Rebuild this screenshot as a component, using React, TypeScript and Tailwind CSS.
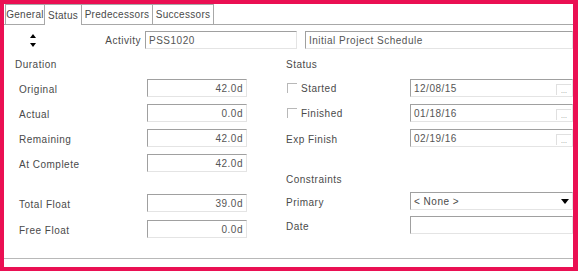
import React from "react";

const font = { fontFamily: '"Liberation Sans", Arial, sans-serif' };

function Box({ value, align = "right", dots = false, w = "w-[100px]" }: { value?: string; align?: "left" | "right"; dots?: boolean; w?: string }) {
  return (
    <div
      className={`relative h-[18px] ${w} border-t border-l border-t-[#a0a0a0] border-l-[#a0a0a0] border-r border-b border-r-[#e4e4e4] border-b-[#e4e4e4] bg-white flex items-center px-[3px] ${
        align === "right" ? "justify-end" : "justify-start"
      }`}
    >
      <span className="text-[10px] tracking-[0.5px] text-[#555]">{value}</span>
      {dots && (
        <div className="absolute right-[1px] bottom-[1px] h-[11px] w-[15px] border-t border-l border-[#e0e0e0] flex items-end justify-center text-[7px] leading-[8px] text-[#888]">
          ...
        </div>
      )}
    </div>
  );
}

function Label({ children, className = "" }: { children: React.ReactNode; className?: string }) {
  return <span className={`text-[10px] tracking-[0.5px] text-[#4a4a4a] ${className}`}>{children}</span>;
}

function Check() {
  return <div className="h-[10px] w-[10px] border-t border-l border-[#b8b8b8]" />;
}

const tabs = [
  { name: "General", w: "w-[40px]" },
  { name: "Status", w: "w-[38px]" },
  { name: "Predecessors", w: "w-[72px]" },
  { name: "Successors", w: "w-[62px]" },
];

export default function App() {
  return (
    <div style={font} className="w-[578px] h-[271px] bg-[#ea1053] pl-[4px] pt-[4px] pr-[5px] pb-[4px]">
      <div className="h-full w-full bg-white flex flex-col">
        {/* tabs */}
        <div className="flex items-end h-[21px] border-b border-[#a8a8a8] pl-[1px]">
          {tabs.map((t) => (
            <div
              key={t.name}
              className={`${t.w} flex items-center justify-center border border-b-0 border-[#a8a8a8] -mr-[1px] bg-white ${
                t.name === "Status" ? "mb-[-1px] h-[21px]" : "h-[20px]"
              }`}
            >
              <span className="text-[10px] tracking-[0.3px] text-[#4a4a4a]">{t.name}</span>
            </div>
          ))}
        </div>

        {/* activity row */}
        <div className="flex items-center mt-[6px] h-[18px]">
          <div className="w-[26px]" />
          <div className="flex flex-col items-center gap-[5px] w-[6px]">
            <svg width="6" height="4" viewBox="0 0 6 4">
              <path d="M3 0 L6 4 L0 4 Z" fill="#000" />
            </svg>
            <svg width="6" height="4" viewBox="0 0 6 4">
              <path d="M0 0 L6 0 L3 4 Z" fill="#000" />
            </svg>
          </div>
          <div className="w-[109px] flex justify-end pr-[4px]">
            <Label>Activity</Label>
          </div>
          <Box value="PSS1020" align="left" w="w-[152px]" />
          <div className="w-[8px]" />
          <Box value="Initial Project Schedule" align="left" w="flex-1" />
        </div>

        {/* body */}
        <div className="flex flex-1">
          {/* left */}
          <div className="w-[282px] flex flex-col">
            <div className="mt-[9px] h-[12px] flex items-center pl-[11px]">
              <Label>Duration</Label>
            </div>
            <div className="mt-[9px] flex flex-col gap-[7px]">
              {[
                ["Original", "42.0d"],
                ["Actual", "0.0d"],
                ["Remaining", "42.0d"],
                ["At Complete", "42.0d"],
              ].map(([l, v]) => (
                <div key={l} className="flex items-center h-[18px]">
                  <div className="w-[143px] pl-[15px]">
                    <Label>{l}</Label>
                  </div>
                  <Box value={v} />
                </div>
              ))}
            </div>
            <div className="mt-[22px] flex flex-col gap-[8px]">
              {[
                ["Total Float", "39.0d"],
                ["Free Float", "0.0d"],
              ].map(([l, v]) => (
                <div key={l} className="flex items-center h-[18px]">
                  <div className="w-[143px] pl-[15px]">
                    <Label>{l}</Label>
                  </div>
                  <Box value={v} />
                </div>
              ))}
            </div>
          </div>

          {/* right */}
          <div className="flex-1 flex flex-col">
            <div className="mt-[9px] h-[12px] flex items-center">
              <Label>Status</Label>
            </div>
            <div className="mt-[9px] flex flex-col gap-[7px]">
              <div className="flex items-center h-[18px]">
                <div className="w-[124px] flex items-center gap-[4px] pl-[1px]">
                  <Check />
                  <Label>Started</Label>
                </div>
                <Box value="12/08/15" align="left" dots w="flex-1" />
              </div>
              <div className="flex items-center h-[18px]">
                <div className="w-[124px] flex items-center gap-[4px] pl-[1px]">
                  <Check />
                  <Label>Finished</Label>
                </div>
                <Box value="01/18/16" align="left" dots w="flex-1" />
              </div>
              <div className="flex items-center h-[18px]">
                <div className="w-[124px]">
                  <Label>Exp Finish</Label>
                </div>
                <Box value="02/19/16" align="left" dots w="flex-1" />
              </div>
            </div>
            <div className="mt-[26px] h-[12px] flex items-center">
              <Label>Constraints</Label>
            </div>
            <div className="mt-[7px] flex flex-col gap-[6px]">
              <div className="flex items-center h-[18px]">
                <div className="w-[124px]">
                  <Label>Primary</Label>
                </div>
                <div className="relative flex-1 h-[18px] border-t border-l border-[#a0a0a0] border-r border-b border-r-[#e4e4e4] border-b-[#e4e4e4] flex items-center px-[3px]">
                  <Label>&lt; None &gt;</Label>
                  <svg className="absolute right-[3px] top-[6px]" width="8" height="5" viewBox="0 0 8 5">
                    <path d="M0 0 L8 0 L4 5 Z" fill="#000" />
                  </svg>
                </div>
              </div>
              <div className="flex items-center h-[18px]">
                <div className="w-[124px]">
                  <Label>Date</Label>
                </div>
                <Box value="" align="left" w="flex-1" />
              </div>
            </div>
          </div>
        </div>
        <div className="h-[9px] border-t border-[#b8b8b8]" />
      </div>
    </div>
  );
}
